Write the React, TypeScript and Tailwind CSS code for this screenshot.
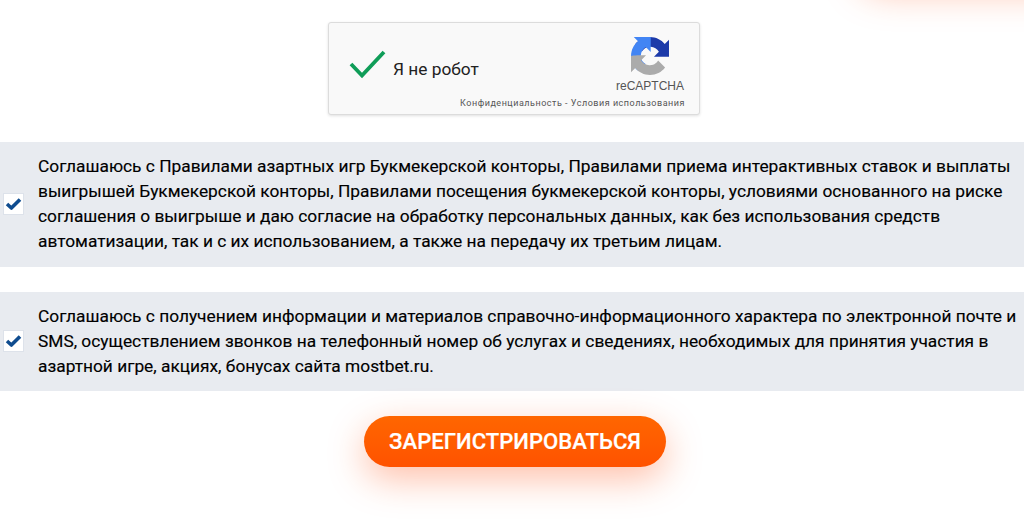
export default function App() {
  return (
    <div className="relative h-[524px] w-[1024px] overflow-hidden bg-white font-['Roboto',sans-serif] text-black">
      {/* glow of the button cut off above the fold */}
      <div className="absolute left-[858px] top-[-72px] h-[52px] w-[320px] rounded-full bg-[#ff5a00] shadow-[0_12px_36px_rgba(255,80,20,0.36)]" />

      <div className="flex flex-col items-center pl-1 pt-[22px]">
        <Captcha />
      </div>

      <div className="mt-[27px] flex flex-col gap-[25px]">
        <AgreeRow>
          Соглашаюсь с Правилами азартных игр Букмекерской конторы, Правилами приема интерактивных ставок и выплаты выигрышей Букмекерской конторы, Правилами посещения букмекерской конторы, условиями основанного на риске соглашения о выигрыше и даю согласие на обработку персональных данных, как без использования средств автоматизации, так и с их использованием, а также на передачу их третьим лицам.
        </AgreeRow>
        <AgreeRow>
          Соглашаюсь с получением информации и материалов справочно-информационного характера по электронной почте и SMS, осуществлением звонков на телефонный номер об услугах и сведениях, необходимых для принятия участия в азартной игре, акциях, бонусах сайта mostbet.ru.
        </AgreeRow>
      </div>

      <div className="mt-[25px] flex justify-center pl-[6px]">
        <button className="h-[51px] w-[302px] rounded-full bg-gradient-to-b from-[#ff6600] to-[#ff5200] text-[22.1px] font-medium text-white shadow-[0_12px_36px_rgba(255,80,20,0.36)] [-webkit-text-stroke:0.2px_white]">
          ЗАРЕГИСТРИРОВАТЬСЯ
        </button>
      </div>
    </div>
  )
}

function AgreeRow({ children }: { children: React.ReactNode }) {
  return (
    <div className="flex items-center bg-[#e8ebf0] py-[12.3px] pl-[3px]">
      <div className="flex h-[22px] w-[21px] shrink-0 items-center justify-center border border-[#dde2ea] bg-white">
        <svg width="17" height="14" viewBox="0 0 17 14" fill="none">
          <path d="M2 7 L6.4 11 L15 2.4" stroke="#0f4c8f" strokeWidth="3.6" strokeLinejoin="round" />
        </svg>
      </div>
      <p className="ml-[14px] text-[17.32px] leading-[25px] [-webkit-text-stroke:0.15px_black]">{children}</p>
    </div>
  )
}

function Captcha() {
  return (
    <div className="flex h-[93px] w-[372px] flex-col rounded-[3px] border border-[#dcdcdc] bg-[#f9f9f9] shadow-[0_1px_3px_rgba(0,0,0,0.12)]">
      <div className="flex flex-1 items-start">
        <svg className="ml-[20px] mt-[27px]" width="37" height="29" viewBox="0 0 37 29" fill="none">
          <path d="M2 14 L13 25.5 L35 2" stroke="#0f9d58" strokeWidth="3.8" />
        </svg>
        <span className="ml-[7px] mt-[36px] text-[17.3px] leading-5 text-[#222]">Я не робот</span>
        <div className="ml-auto mr-[15px] mt-[14px] flex flex-col items-center">
          <svg width="38" height="38" viewBox="0 0 64 64" fill="none">
            <path d="M64 31.955l-.033-1.37V4.687l-7.16 7.16C50.948 4.674 42.033.093 32.05.093c-10.4 0-19.622 4.96-25.458 12.64l11.736 11.86a15.55 15.55 0 0 1 4.754-5.334c2.05-1.6 4.952-2.906 8.968-2.906.485 0 .86.057 1.135.163 5.808.458 10.84 3.664 13.8 8.318l-8.308 8.308c10.523-.04 22.4-.066 29.916.1" fill="#1c3aa9" />
            <path d="M31.95.001l-1.37.033H4.68l7.16 7.16C4.674 13.05.093 21.967.093 31.95c0 10.4 4.96 19.622 12.64 25.458l11.86-11.736a15.55 15.55 0 0 1-5.334-4.754c-1.6-2.05-2.906-4.952-2.906-8.968 0-.485.057-.86.163-1.135.458-5.808 3.664-10.84 8.318-13.8l8.308 8.308.2-29.922" fill="#4285f4" />
            <path d="M.001 32.045l.033 1.37V59.31l7.16-7.16C13.05 59.326 21.967 63.907 31.95 63.907c10.4 0 19.622-4.96 25.458-12.64L45.672 39.407a15.55 15.55 0 0 1-4.754 5.334c-2.05 1.6-4.952 2.906-8.968 2.906-.485 0-.86-.057-1.135-.163-5.808-.458-10.84-3.664-13.8-8.318l8.308-8.308C15.8 30.9 3.9 30.9 0 32.045" fill="#ababab" />
          </svg>
          <span className="mt-[4px] font-['Liberation_Sans',sans-serif] text-[12px] leading-[14px] text-[#555]">reCAPTCHA</span>
        </div>
      </div>
      <div className="mb-[5px] mr-[14px] text-right text-[9px] leading-3 tracking-[0.52px] text-[#555]">
        Конфиденциальность - Условия использования
      </div>
    </div>
  )
}
